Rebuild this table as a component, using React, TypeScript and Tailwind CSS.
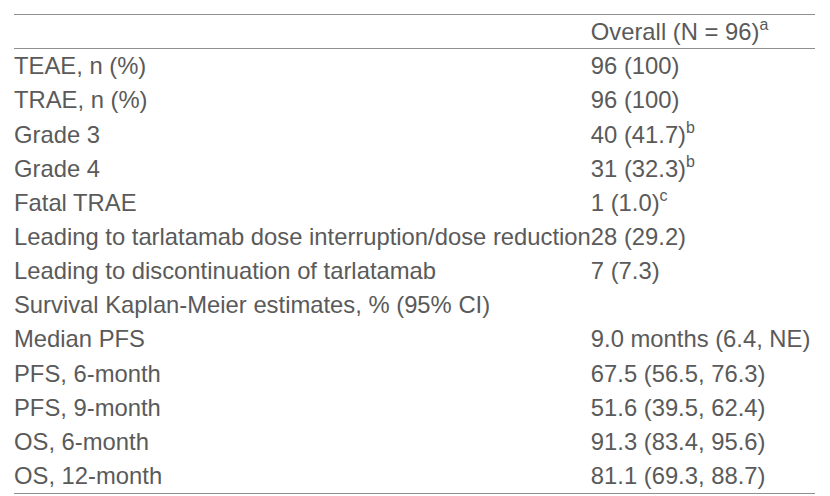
import React from "react";

type Row = { label: string; value: string; sup?: string };

const rows: Row[] = [
  { label: "TEAE, n (%)", value: "96 (100)" },
  { label: "TRAE, n (%)", value: "96 (100)" },
  { label: "Grade 3", value: "40 (41.7)", sup: "b" },
  { label: "Grade 4", value: "31 (32.3)", sup: "b" },
  { label: "Fatal TRAE", value: "1 (1.0)", sup: "c" },
  { label: "Leading to tarlatamab dose interruption/dose reduction", value: "28 (29.2)" },
  { label: "Leading to discontinuation of tarlatamab", value: "7 (7.3)" },
  { label: "Survival Kaplan-Meier estimates, % (95% CI)", value: "" },
  { label: "Median PFS", value: "9.0 months (6.4, NE)" },
  { label: "PFS, 6-month", value: "67.5 (56.5, 76.3)" },
  { label: "PFS, 9-month", value: "51.6 (39.5, 62.4)" },
  { label: "OS, 6-month", value: "91.3 (83.4, 95.6)" },
  { label: "OS, 12-month", value: "81.1 (69.3, 88.7)" },
];

export default function App() {
  return (
    <div
      className="w-[830px] h-[496px] bg-white text-[#5a5a5a] text-[23.8px] overflow-hidden"
      style={{ fontFamily: '"Liberation Sans", Arial, sans-serif' }}
    >
      <div className="ml-[14px] mt-[14px] w-[801px] border-t border-b border-[#8f8f8f] grid grid-cols-[max-content_1fr] whitespace-nowrap">
        <div className="h-[34px] border-b border-[#8f8f8f]" />
        <div className="h-[34px] border-b border-[#8f8f8f] flex items-center">
          <span>
            Overall (N = 96)
            <sup className="text-[16px] top-[-0.6em]">a</sup>
          </span>
        </div>
        {rows.map((r) => (
          <React.Fragment key={r.label}>
            <div className="h-[34.15px] flex items-center">{r.label}</div>
            <div className="h-[34.15px] flex items-center">
              <span>
                {r.value}
                {r.sup && <sup className="text-[16px] top-[-0.6em]">{r.sup}</sup>}
              </span>
            </div>
          </React.Fragment>
        ))}
      </div>
    </div>
  );
}
